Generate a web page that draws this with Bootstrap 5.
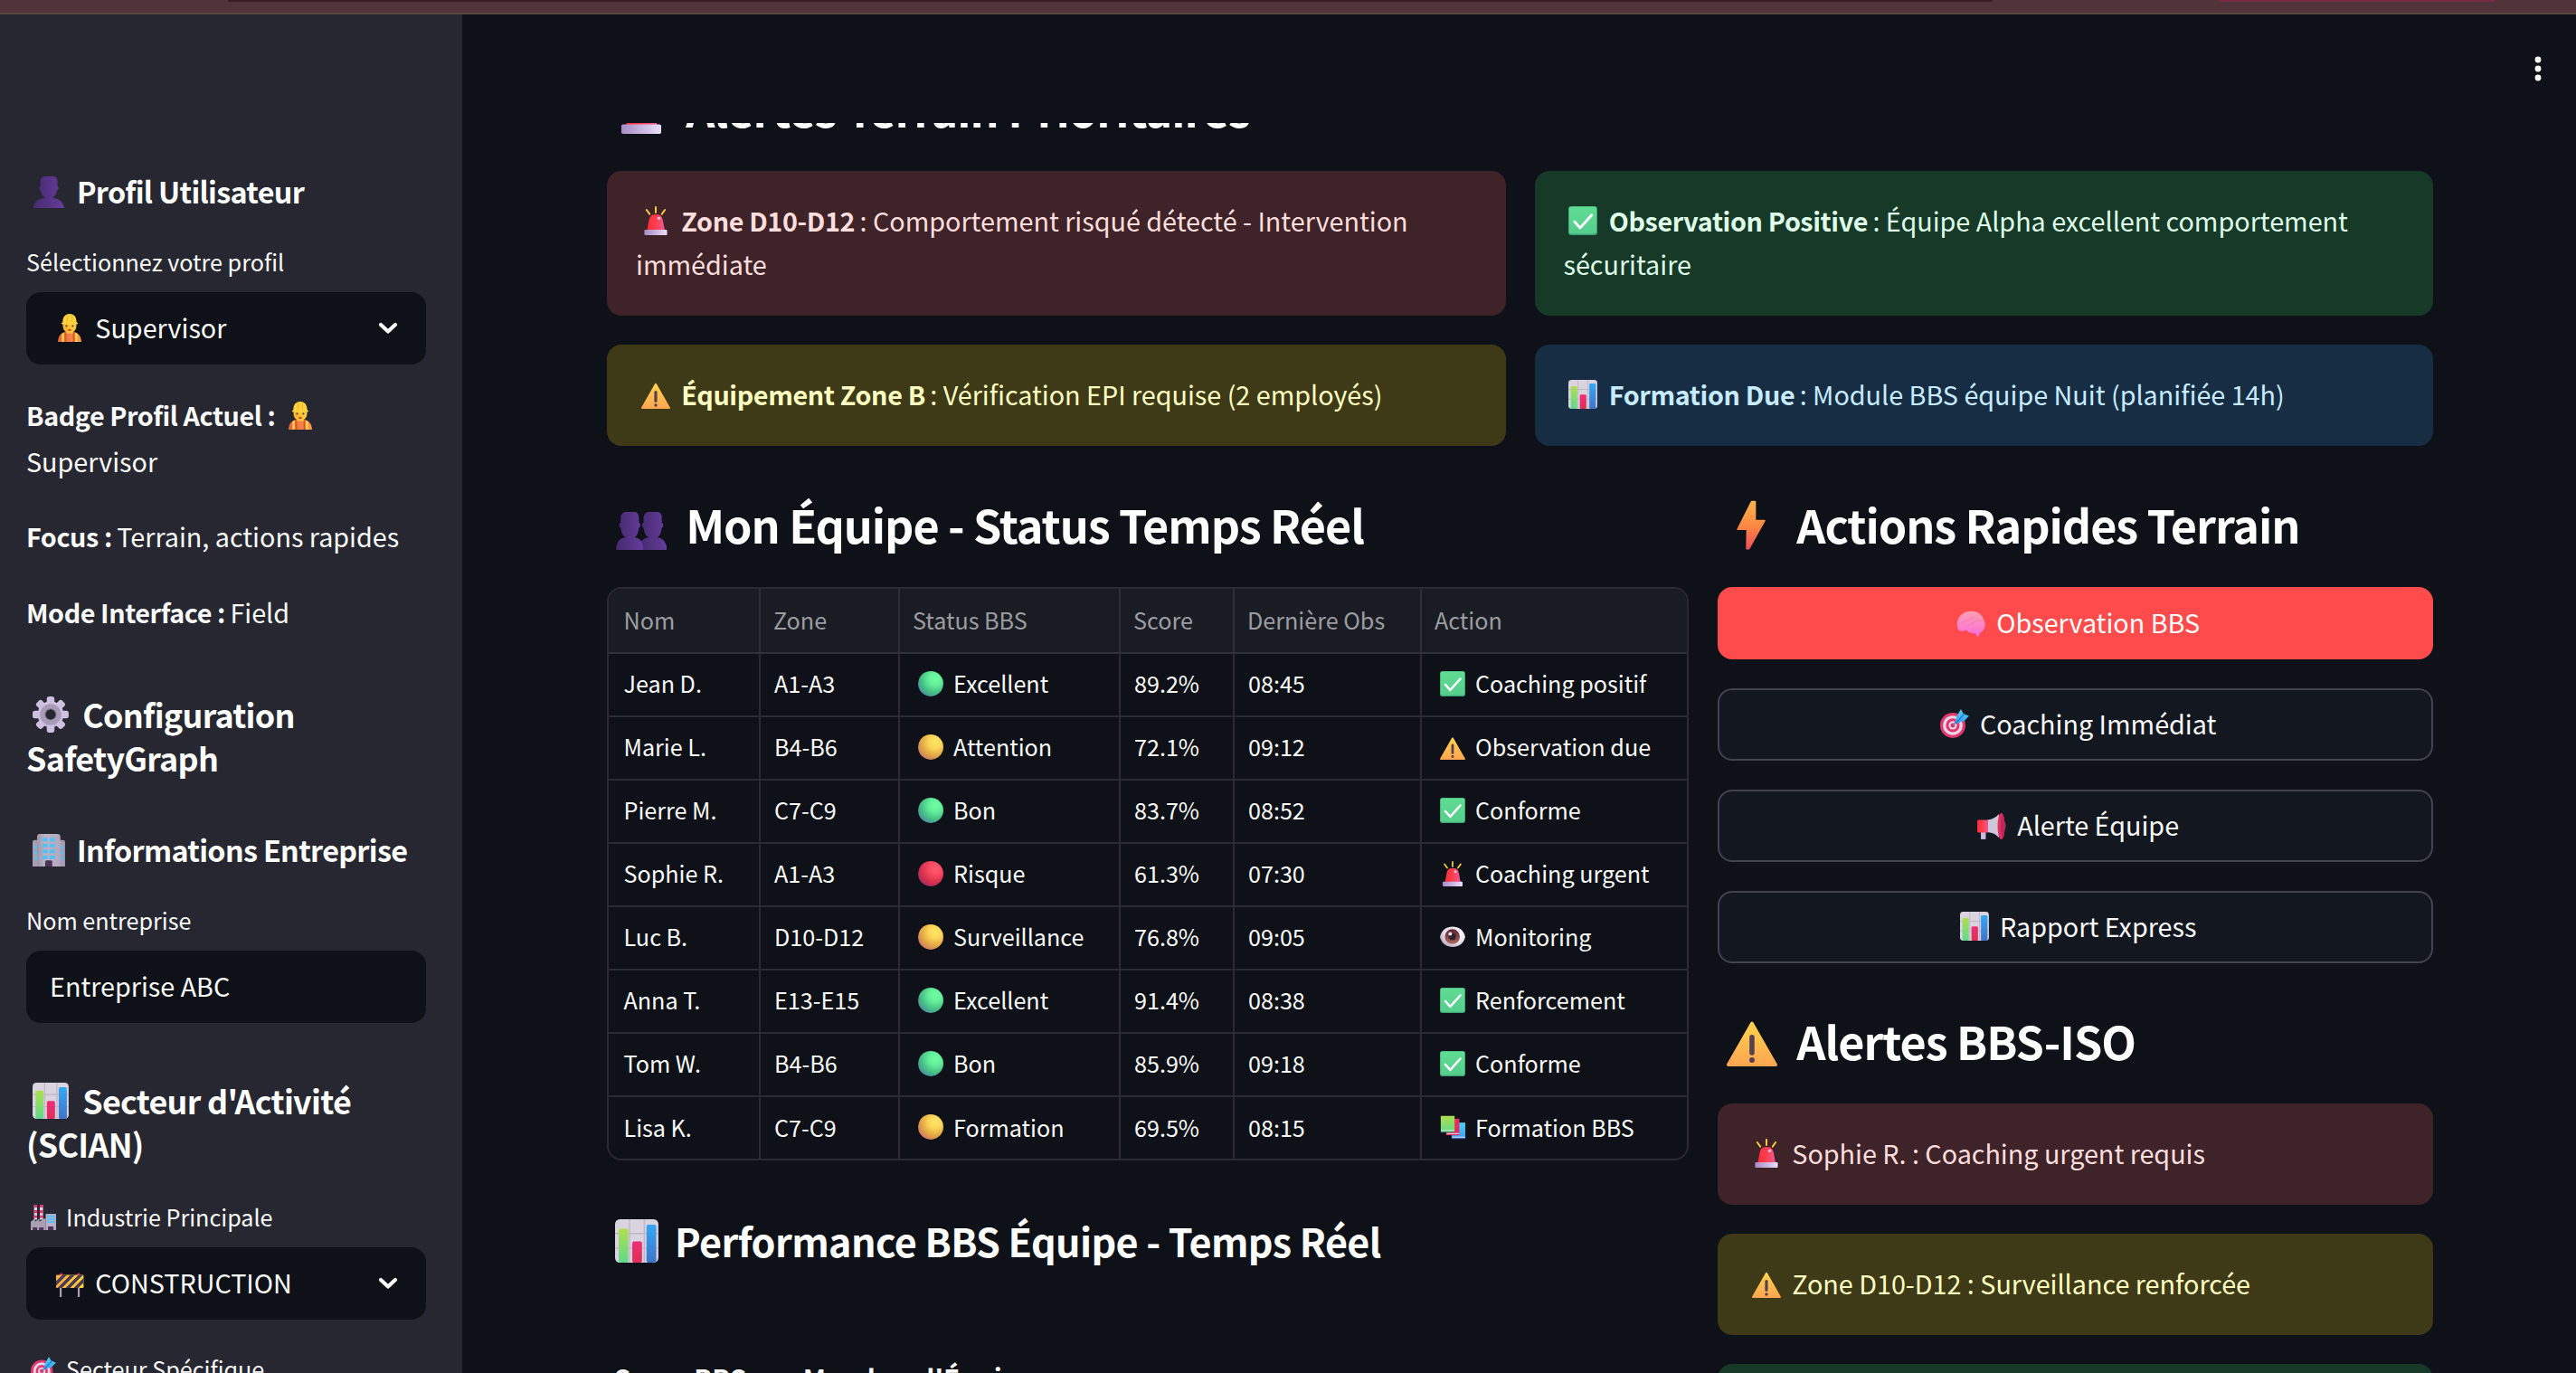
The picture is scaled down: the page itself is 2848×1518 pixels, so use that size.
<!DOCTYPE html>
<html lang="fr" data-bs-theme="dark">
<head>
<meta charset="utf-8">
<meta name="viewport" content="width=device-width, initial-scale=1">
<title>SafetyGraph</title>
<link href="https://cdn.jsdelivr.net/npm/bootstrap@5.3.0/dist/css/bootstrap.min.css" rel="stylesheet">
<style>
  html, body { height: 100%; }
  body { background: #0e1117; color: #fafafa; font-family: "Noto Sans CJK SC", "Noto Sans", sans-serif; font-size: 28.72px; overflow: hidden; }
  strong { font-weight: 700; letter-spacing: -.0125em; margin-right: -1px; }

  /* browser strip */
  .strip { height: 16px; background: #503439; border-bottom: 2px solid #57453f; padding-left: 252px; }
  .strip .omnibar { width: 1951px; height: 2px; background: #381e22; border-radius: 0 0 12px 12px; }
  .strip .pill { width: 306px; height: 2px; margin-left: 250px; background: #782c44; border-radius: 0 0 12px 12px; }

  /* emoji drawings, aligned on the text baseline */
  .emo { width: 1.112em; height: 1.112em; margin: 0 .208em; vertical-align: -.14em; overflow: visible; }

  /* sidebar */
  .side { width: 511px; background: #262730; padding: 173px 40px 0 29px; }
  .side h2, .side h3 { font-weight: 700; margin: 0; letter-spacing: -.0205em; white-space: nowrap; }
  .side h2 { font-size: 35.9px; line-height: 48px; }
  .side h3 { font-size: 32.3px; line-height: 44px; }
  .side p { line-height: 51.2px; margin: 0 0 32px; }
  .side label { display: block; font-size: 25.15px; line-height: 40px; margin-top: 36px; margin-bottom: 14px; white-space: nowrap; }
  .field { height: 80px; border-radius: 16px; background: #0e1117; padding: 0 31px 0 26px; line-height: 78px; }
  .field .chev { width: 22px; height: 14px; margin-top: 33px; }
  .profile { margin-top: 30px; }
  .profile strong { letter-spacing: -.0145em; }

  /* main area */
  .topbar { height: 120px; padding-right: 38px; padding-top: 22px; }
  .dots { width: 8px; height: 28px; }
  .page { margin: -50px 158px 0 160px; }
  .sec { font-size: 50.3px; font-weight: 700; line-height: 67px; letter-spacing: -.0205em; margin: 0 0 36px; white-space: nowrap; }
  .sub { font-size: 43.1px; font-weight: 700; line-height: 58px; letter-spacing: -.014em; margin: 59px 0 0; white-space: nowrap; }
  .plot-title { font-size: 29.6px; font-weight: 700; line-height: 40px; margin: 104px 0 0 8px; white-space: nowrap; }
  .gap-32 { gap: 32px; }
  .pair { display: grid; grid-template-columns: 1fr 1fr; gap: 32px; }
  .lower { margin-top: 53px; }
  .team { width: 1196px; }
  .note { border: 0; border-radius: 16px; margin: 0; padding: 30.5px 32px 33.5px; line-height: 48px; }
  .note-red { background: #3e2328; color: #ffdede; }
  .note-green { background: #173928; color: #dffde9; }
  .note-yellow { background: #3e3a17; color: #ffffc2; }
  .note-blue { background: #172d43; color: #c7ebff; }

  .grid-wrap { border: 2px solid #292b30; border-radius: 16px; overflow: hidden; }
  .grid-wrap table { table-layout: fixed; margin: 0; border-collapse: separate; border-spacing: 0; font-size: 25.15px; --bs-table-bg: transparent; }
  .grid-wrap th, .grid-wrap td { height: 70px; padding: 0 0 4px 15px; line-height: 40px; border: 0 solid #292b30; border-width: 0 2px 2px 0; vertical-align: middle; white-space: nowrap; color: #fafafa; }
  .grid-wrap th { height: 72px; background: #1a1c24; color: #9c9da1; font-weight: 400; border-color: #2f3138; padding-left: 14px; padding-bottom: 2px; }
  .grid-wrap th:first-child, .grid-wrap td:first-child { padding-left: 16.5px; }
  .grid-wrap th:last-child, .grid-wrap td:last-child { border-right-width: 0; }
  .grid-wrap tbody tr:last-child td { border-bottom-width: 0; height: 68px; padding-bottom: 3px; }

  .act { height: 80px; border: 2px solid #41444c; border-radius: 16px; background: #131720; color: #fafafa; font-size: inherit; line-height: 71px; padding: 0 0 4px; }
  .act.act-main { background: #ff4b4b; border-color: #ff4b4b; color: #fff; }
  .iso { margin-top: 52px; }
</style>
<script src="https://cdn.jsdelivr.net/npm/bootstrap@5.3.0/dist/js/bootstrap.bundle.min.js"></script>
</head>
<body class="d-flex flex-column">

<svg width="0" height="0" class="position-absolute" aria-hidden="true">
  <defs>
    <linearGradient id="gPurple" x1="0" x2="1"><stop offset="0" stop-color="#472a70"/><stop offset="1" stop-color="#633c9a"/></linearGradient>
    <linearGradient id="gRed" x1="0" x2="1"><stop offset="0" stop-color="#ff2d35"/><stop offset=".5" stop-color="#ff3f50"/><stop offset="1" stop-color="#f0589a"/></linearGradient>
    <linearGradient id="gBase" x1="0" x2="1"><stop offset="0" stop-color="#a68cc4"/><stop offset="1" stop-color="#eadff8"/></linearGradient>
    <linearGradient id="gWarn" x1="0" y1="0" x2="0" y2="1"><stop offset="0" stop-color="#ffd24d"/><stop offset="1" stop-color="#ffa651"/></linearGradient>
    <linearGradient id="gLime" x1="0" y1="0" x2="0" y2="1"><stop offset="0" stop-color="#aee04d"/><stop offset="1" stop-color="#5fd98c"/></linearGradient>
    <linearGradient id="gPink" x1="0" y1="0" x2="0" y2="1"><stop offset="0" stop-color="#f02f78"/><stop offset="1" stop-color="#dc2f55"/></linearGradient>
    <linearGradient id="gBlue" x1="0" y1="0" x2="0" y2="1"><stop offset="0" stop-color="#36a8f5"/><stop offset="1" stop-color="#3f74c8"/></linearGradient>
    <linearGradient id="gSky" x1="0" y1="0" x2="0" y2="1"><stop offset="0" stop-color="#4bd0ef"/><stop offset="1" stop-color="#3aa0f4"/></linearGradient>
    <linearGradient id="gGear" x1="0" y1="0" x2="0" y2="1"><stop offset="0" stop-color="#dcd3ea"/><stop offset="1" stop-color="#b9a5d3"/></linearGradient>
    <linearGradient id="gWall" x1="0" x2="1"><stop offset="0" stop-color="#9f96a6"/><stop offset=".35" stop-color="#bcb2c6"/><stop offset="1" stop-color="#b3a9bf"/></linearGradient>
    <linearGradient id="gBolt" x1="0" y1="0" x2="0" y2="1"><stop offset="0" stop-color="#fdb447"/><stop offset=".55" stop-color="#fb8543"/><stop offset="1" stop-color="#f2505a"/></linearGradient>
    <linearGradient id="gBrain" x1="0" y1="0" x2="0" y2="1"><stop offset="0" stop-color="#ff9fb0"/><stop offset="1" stop-color="#fd6be0"/></linearGradient>
    <linearGradient id="gStripe" x1="0" x2="1"><stop offset="0" stop-color="#ffab45"/><stop offset="1" stop-color="#fdd835"/></linearGradient>
    <linearGradient id="gFace" x1="0" x2="1"><stop offset="0" stop-color="#ffb22b"/><stop offset="1" stop-color="#ffcf3a"/></linearGradient>
    <linearGradient id="gVest" x1="0" x2="1"><stop offset="0" stop-color="#e8643a"/><stop offset="1" stop-color="#ff9a55"/></linearGradient>
    <linearGradient id="gCheck" x1="0" y1="0" x2="0" y2="1"><stop offset="0" stop-color="#5fdc93"/><stop offset="1" stop-color="#56cd8c"/></linearGradient>
    <radialGradient id="gGreenBall" cx=".68" cy=".3" r=".75"><stop offset="0" stop-color="#70ffa3"/><stop offset=".35" stop-color="#64ef9b"/><stop offset=".75" stop-color="#45bd83"/><stop offset="1" stop-color="#4c93a0"/></radialGradient>
    <radialGradient id="gYellowBall" cx=".68" cy=".3" r=".75"><stop offset="0" stop-color="#ffe766"/><stop offset=".35" stop-color="#fbd558"/><stop offset=".75" stop-color="#dfa444"/><stop offset="1" stop-color="#cf7d66"/></radialGradient>
    <radialGradient id="gRedBall" cx=".68" cy=".3" r=".75"><stop offset="0" stop-color="#ff5c72"/><stop offset=".35" stop-color="#f84a60"/><stop offset=".75" stop-color="#d5304c"/><stop offset="1" stop-color="#a82a66"/></radialGradient>
    <radialGradient id="gEye" cx=".65" cy=".35" r=".8"><stop offset="0" stop-color="#fff"/><stop offset=".6" stop-color="#e6dfe8"/><stop offset="1" stop-color="#a58cb8"/></radialGradient>
    <linearGradient id="gIris" x1="0" y1="0" x2="0" y2="1"><stop offset="0" stop-color="#5d2437"/><stop offset="1" stop-color="#b06a5c"/></linearGradient>
    <clipPath id="cBoard"><rect x="1" y="7.5" width="30.500" height="14.500" rx="1"/></clipPath>
  </defs>
  <symbol id="bust" viewBox="0 0 32 32"><path fill="url(#gPurple)" d="M12.500 1h7.500c3 0 4.500 2 4.500 5v4.500c1.500 0 1.400 4-.4 4-.6 4.500-3.500 7-5.100 7.500 7 .5 11.300 4 12.200 10H.6c.9-6 5.200-9.500 12.200-10-1.600-.5-4.300-3-4.900-7.500-1.600 0-1.700-4-.2-4V6c0-3 1.800-5 4.800-5z"/></symbol>
  <symbol id="busts" viewBox="0 0 32 32"><path fill="url(#gPurple)" d="M21 8h5c2 0 3 1.500 3 3.500v3.300c1.200 0 1.200 3.200 0 3.200-.3 3.400-1.500 5.500-3 6.200 3.500.2 6.300 3 6.300 8H15c0-5 1.500-7.800 6-8-1.800-.7-3.200-2.800-3.500-6.200-1.200 0-1.200-3.200 0-3.200v-3.300C17.500 9.500 19 8 21 8z"/><path fill="url(#gPurple)" d="M6.500 8h5c2 0 3 1.500 3 3.500v3.300c1.200 0 1.200 3.200 0 3.200-.3 3.400-1.500 5.500-3 6.200 4 .2 5.800 3 5.800 8H.2c0-5 1.800-7.800 6.300-8-1.800-.7-3.200-2.800-3.500-6.200-1.200 0-1.200-3.200 0-3.200v-3.300C3 9.500 4.500 8 6.500 8z"/></symbol>
  <symbol id="worker" viewBox="0 0 32 32"><path fill="url(#gVest)" d="M3 32c.3-6.500 3.500-10.500 9-11h8c5.500.5 8.700 4.500 9 11z"/><path fill="#ffdc45" d="M7.500 23l2.300-1.300V32H7.500zM22.200 21.700l2.300 1.300v9h-2.300z"/><path fill="#e0562f" d="M10.500 21.300h2V32h-2zM19.600 21.300h2V32h-2z"/><path fill="url(#gFace)" d="M8.500 10h15v4c0 3.500-1.500 5.800-4 7.500v1.200h-7v-1.200c-2.500-1.700-4-4-4-7.500z"/><path fill="#ffd23c" d="M8.300 10.500C8.300 4.500 11 1 16 1s7.700 3.500 7.700 9.500l1 .3c.6.200.6 1.400 0 1.500-5.800 1-11.600 1-17.400 0-.6-.1-.6-1.300 0-1.500z"/><path fill="#f5b731" d="M13 1.500h1v9h-1zM18 1.500h1v9h-1z"/><circle cx="12.500" cy="14.500" r="1.100" fill="#5c4a52"/><circle cx="19.500" cy="14.500" r="1.100" fill="#5c4a52"/><ellipse cx="16" cy="19" rx="2" ry=".9" fill="#c43b3b"/></symbol>
  <symbol id="gear" viewBox="0 0 32 32"><g fill="url(#gGear)"><path fill-rule="evenodd" d="M16 4.500a11.500 11.500 0 1 0 0 23 11.500 11.500 0 0 0 0-23zm0 6.500a5 5 0 1 1 0 10 5 5 0 0 1 0-10z"/></g><g fill="#cdc0e0"><rect id="tooth" x="12.600" y="0" width="6.800" height="8" rx="2.200"/><use href="#tooth" transform="rotate(45 16 16)"/><use href="#tooth" transform="rotate(90 16 16)"/><use href="#tooth" transform="rotate(135 16 16)"/><use href="#tooth" transform="rotate(180 16 16)"/><use href="#tooth" transform="rotate(225 16 16)"/><use href="#tooth" transform="rotate(270 16 16)"/><use href="#tooth" transform="rotate(315 16 16)"/></g><circle cx="16" cy="16" r="7.300" fill="none" stroke="#a99cb8" stroke-width="4.200"/><circle cx="16" cy="16" r="5" fill="none" stroke="#8d829a" stroke-width="1"/></symbol>
  <symbol id="office" viewBox="0 0 32 32"><path fill="#a79db2" d="M0 8q0-2 2-2h28q2 0 2 2v24H0z"/><path fill="url(#gWall)" d="M4.400 3q0-3 3-3h17q3 0 3 3v29h-23z"/><g fill="#4cc3fb"><path d="M9.800 4h5v3.400h-5zM9.800 9.800h5v3.400h-5zM9.800 15.600h5V19h-5zM9.800 21.400h5v3.400h-5zM17 4h4.800v3.400H17zM17 9.800h4.800v3.400H17zM17 15.600h4.800V19H17zM17 21.400h4.800v3.400H17zM1.800 11.500h2.600v3H1.800zM1.800 17h2.600v3H1.800zM1.800 22.500h2.600v3H1.800zM27.600 11.500h2.600v3h-2.600zM27.600 17h2.600v3h-2.600zM27.600 22.500h2.600v3h-2.600z"/></g><path fill="#493453" d="M12.400 32v-4.500q0-1.500 1.500-1.500h4q1.500 0 1.500 1.500V32z"/></symbol>
  <symbol id="chart" viewBox="0 0 32 32"><rect width="32" height="32" rx="3.500" fill="#dad3e0"/><path stroke="#bfb6c6" stroke-width=".9" d="M10.700 0v32M21.600 0v32M0 10.500h32M0 21.300h32" fill="none"/><rect x="2.700" y="7" width="7" height="25" rx="1.300" fill="url(#gLime)"/><rect x="12.700" y="16.300" width="7.200" height="15.700" rx="1.300" fill="url(#gPink)"/><rect x="23.200" y="4" width="7.200" height="28" rx="1.300" fill="url(#gBlue)"/></symbol>
  <symbol id="factory" viewBox="0 0 32 32"><path fill="#dfd8e6" d="M4.200 0H8v19H4.200zM11.500 0h4v19h-4z"/><path fill="#e8336b" d="M4.200 0H8v3.500H4.200zM4.200 7H8v3.500H4.200zM4.200 13.500H8v3H4.200zM11.500 0h4v3.500h-4zM11.500 7h4v3.500h-4zM11.500 13.500h4v3h-4z"/><path fill="#aaa0b4" d="M0 32V21.500l5.500-4v4l5.500-4v4l5.500-4H19V32z"/><path fill="#b9afc6" d="M19 11.500h13V32H19z"/><path fill="#49c0fa" d="M20.800 13.500h2.700v2.600h-2.700zM24.300 13.500H27v2.600h-2.700zM27.800 13.500h2.700v2.600h-2.700zM20.800 16.900h2.700v2.600h-2.700zM24.300 16.900H27v2.600h-2.700zM27.800 16.900h2.700v2.600h-2.700zM20.800 20.300h2.700v2.600h-2.700zM24.300 20.300H27v2.600h-2.700zM27.800 20.300h2.700v2.600h-2.700z"/><path fill="#4a3757" d="M2.500 28.500h5.700V32H2.500zM10.500 28.500h5.700V32h-5.700zM21.800 27.500h7V32h-7z"/></symbol>
  <symbol id="barrier" viewBox="0 0 32 32"><path fill="#ac9cb8" d="M5 21h2.200v11H5zM25 21h2.200v11H25z"/><circle cx="6.800" cy="7" r="1.700" fill="#c42355"/><circle cx="26" cy="7" r="1.700" fill="#c42355"/><g clip-path="url(#cBoard)"><path fill="url(#gStripe)" d="M0 7h32v16H0z"/><path stroke="#4b3a52" stroke-width="3.600" d="M-5 23L12 6M4 23L21 6M13 23L30 6M22 23L39 6"/></g></symbol>
  <symbol id="target" viewBox="0 0 32 32"><circle cx="14" cy="18" r="14" fill="#e23a6e"/><circle cx="14" cy="18" r="10.800" fill="#e4d8ea"/><circle cx="14" cy="18" r="7.600" fill="#e8366c"/><circle cx="14" cy="18" r="4.600" fill="#e4d8ea"/><circle cx="14" cy="18" r="2.500" fill="#e0306a"/><path stroke="#8b7c9c" stroke-width="1.700" d="M14 18l6-6"/><path fill="url(#gSky)" d="M16.500 16.500l1.500-8L23 0l2.800 5.200L32 7.500 26.800 13z"/><path stroke="#1f76d8" stroke-width="1.300" d="M17 16L27 5"/></symbol>
  <symbol id="siren" viewBox="0 0 32 32"><path stroke="#ffc93f" stroke-width="2" stroke-linecap="round" d="M16 1v6M5.800 4l3.400 4.600M26.200 4l-3.400 4.600"/><path fill="url(#gRed)" d="M6.300 27l2.300-12c.8-3.800 3-5.700 5.700-5.700h3.800c2.700 0 4.900 1.900 5.700 5.700l2.300 12z"/><ellipse cx="19.500" cy="13.500" rx="1.600" ry="1.400" fill="#ffd7dc"/><rect x="3.400" y="26" width="25.200" height="6" rx="1" fill="url(#gBase)"/></symbol>
  <symbol id="check" viewBox="0 0 32 32"><rect width="32" height="32" rx="3" fill="#3ea477"/><rect x=".8" y=".6" width="30.400" height="30" rx="2.500" fill="url(#gCheck)"/><path d="M6.800 17l6.200 7L25.800 9.700" fill="none" stroke="#fff" stroke-width="2.900" stroke-linecap="round" stroke-linejoin="round"/></symbol>
  <symbol id="warn" viewBox="0 0 32 32"><path fill="url(#gWarn)" stroke="url(#gWarn)" stroke-width="2" stroke-linejoin="round" d="M16 4.800L31 31H1z"/><rect x="14.400" y="12" width="3.200" height="13" rx="1.600" fill="#56414f"/><circle cx="16" cy="28" r="1.700" fill="#56414f"/></symbol>
  <symbol id="bolt" viewBox="0 0 32 32"><path fill="url(#gBolt)" stroke="url(#gBolt)" stroke-width="1" stroke-linejoin="round" d="M15.800 1.500h2.200L18 13.500h6L14 31.300h-1.300l.2-12.300H7z"/></symbol>
  <symbol id="brain" viewBox="0 0 32 32"><path fill="url(#gBrain)" d="M3 25C-1 20 .5 12 5 8c4-4 9-5 14-4 6 .5 10 4.500 11.500 9.500 2.500 5.500 1 12-4.500 14-.6 2-.8 4.500-3 4.200-1.200-1-1-2.500-2-3.500-5 0-8.500-1-10-4C8 26 5 26.500 3 25z"/><path fill="none" stroke="#f07aa8" stroke-width="1" stroke-linecap="round" d="M4 17c3 0 5-3 8-3s4-3 7-4M12 21c2-4 6-3 8-5s5-1 8-2M16 25c2-3 6-1 9-4"/></symbol>
  <symbol id="horn" viewBox="0 0 32 32"><path fill="#c9b9dc" d="M4 23h5.500v9H4z"/><ellipse cx="28" cy="17" rx="4" ry="5.500" fill="#4a3553"/><path fill="#cfc6da" d="M11.500 10.500C17 10 21 7.500 24 4v26c-3-3.500-7-5.500-12.500-6z"/><path fill="url(#gRed)" d="M1.500 10.500h10.300V24.500H1.500Q0 24.500 0 23V12q0-1.500 1.500-1.500z"/><ellipse cx="26.600" cy="17.500" rx="4" ry="14.500" fill="#e22f62"/><ellipse cx="28.300" cy="17.500" rx="2.300" ry="12.500" fill="#bf2556"/></symbol>
  <symbol id="eye" viewBox="0 0 32 32"><path fill="url(#gEye)" d="M0 16C2 7 8.500 3 16 3s14 4 16 13c-2 8.500-8.500 12.500-16 12.500S2 24.500 0 16z"/><circle cx="15.700" cy="15.500" r="9.500" fill="url(#gIris)"/><circle cx="15.700" cy="15.500" r="4.600" fill="#33222c"/><circle cx="13" cy="12" r="2.300" fill="#e9dfe6"/></symbol>
  <symbol id="books" viewBox="0 0 32 32"><path fill="url(#gSky)" d="M15 10.500h17.500V31H15z"/><path fill="#d9e3f5" d="M15.500 28.300h16.500v1.200H15.500z"/><path fill="#4a5bb8" d="M15 29.700h17.500V31H15z"/><path fill="#e62e5e" d="M8 5.500h16.500V26.500H8z"/><path fill="#f3dbe6" d="M8.500 23.800h15.500V25H8.500z"/><path fill="url(#gLime)" d="M1 2h17.500v21H1z"/><path fill="#e5f3ea" d="M1.500 20h16.500v1.200H1.500z"/><path fill="#348a6e" d="M1 21.600h17.500V23H1z"/></symbol>
  <symbol id="ok" viewBox="0 0 32 32"><circle cx="16" cy="16" r="16" fill="url(#gGreenBall)"/></symbol>
  <symbol id="mid" viewBox="0 0 32 32"><circle cx="16" cy="16" r="16" fill="url(#gYellowBall)"/></symbol>
  <symbol id="bad" viewBox="0 0 32 32"><circle cx="16" cy="16" r="16" fill="url(#gRedBall)"/></symbol>
  <symbol id="chevron" viewBox="0 0 22 14"><path d="M3 3l8 7.500L19 3" fill="none" stroke="#fafafa" stroke-width="4.200" stroke-linecap="round" stroke-linejoin="round"/></symbol>
</svg>

<div class="strip d-flex flex-shrink-0"><div class="omnibar"></div><div class="pill"></div></div>

<div class="d-flex flex-fill overflow-hidden">
  <aside class="side flex-shrink-0 overflow-hidden">
    <h3><svg class="emo"><use href="#bust"/></svg> Profil Utilisateur</h3>
    <label>Sélectionnez votre profil</label>
    <div class="field d-flex justify-content-between"><span><svg class="emo"><use href="#worker"/></svg> Supervisor</span><svg class="chev"><use href="#chevron"/></svg></div>
    <div class="profile">
      <p><strong>Badge Profil Actuel :</strong> <svg class="emo"><use href="#worker"/></svg><br>Supervisor</p>
      <p><strong>Focus :</strong> Terrain, actions rapides</p>
      <p class="mb-0"><strong>Mode Interface :</strong> Field</p>
    </div>
    <h2 style="margin-top:63.500px"><svg class="emo"><use href="#gear"/></svg> Configuration<br>SafetyGraph</h2>
    <h3 style="margin-top:56px"><svg class="emo"><use href="#office"/></svg> Informations Entreprise</h3>
    <label>Nom entreprise</label>
    <div class="field">Entreprise ABC</div>
    <h2 style="margin-top:61px"><svg class="emo"><use href="#chart"/></svg> Secteur d'Activité<br>(SCIAN)</h2>
    <label style="margin-top:37px"><svg class="emo"><use href="#factory"/></svg> Industrie Principale</label>
    <div class="field d-flex justify-content-between"><span><svg class="emo"><use href="#barrier"/></svg> CONSTRUCTION</span><svg class="chev"><use href="#chevron"/></svg></div>
    <label style="margin-top:34px"><svg class="emo"><use href="#target"/></svg> Secteur Spécifique</label>
  </aside>

  <main class="d-flex flex-column flex-fill overflow-hidden">
    <header class="topbar d-flex justify-content-end align-items-start flex-shrink-0">
      <svg class="dots mt-4" viewBox="0 0 8 28"><g fill="#fafafa"><circle cx="4" cy="4" r="3.400"/><circle cx="4" cy="14" r="3.400"/><circle cx="4" cy="24" r="3.400"/></g></svg>
    </header>
    <div class="flex-fill overflow-hidden">
      <div class="page">
        <h3 class="sec"><svg class="emo"><use href="#siren"/></svg> Alertes Terrain Prioritaires</h3>
        <div class="pair">
          <div class="alert note note-red"><svg class="emo"><use href="#siren"/></svg> <strong>Zone D10-D12</strong> : Comportement risqué détecté - Intervention immédiate</div>
          <div class="alert note note-green"><svg class="emo"><use href="#check"/></svg> <strong>Observation Positive</strong> : Équipe Alpha excellent comportement sécuritaire</div>
          <div class="alert note note-yellow"><svg class="emo"><use href="#warn"/></svg> <strong>Équipement Zone B</strong> : Vérification EPI requise (2 employés)</div>
          <div class="alert note note-blue"><svg class="emo"><use href="#chart"/></svg> <strong>Formation Due</strong> : Module BBS équipe Nuit (planifiée 14h)</div>
        </div>

        <div class="lower d-flex gap-32">
          <section class="team flex-shrink-0">
            <h3 class="sec"><svg class="emo"><use href="#busts"/></svg> Mon Équipe - Status Temps Réel</h3>
            <div class="grid-wrap">
              <table class="table">
                <colgroup><col style="width:168px"><col style="width:154px"><col style="width:244px"><col style="width:126px"><col style="width:207px"><col></colgroup>
                <thead><tr><th>Nom</th><th>Zone</th><th>Status BBS</th><th>Score</th><th>Dernière Obs</th><th>Action</th></tr></thead>
                <tbody>
                  <tr><td>Jean D.</td><td>A1-A3</td><td><svg class="emo"><use href="#ok"/></svg> Excellent</td><td>89.2%</td><td>08:45</td><td><svg class="emo"><use href="#check"/></svg> Coaching positif</td></tr>
                  <tr><td>Marie L.</td><td>B4-B6</td><td><svg class="emo"><use href="#mid"/></svg> Attention</td><td>72.1%</td><td>09:12</td><td><svg class="emo"><use href="#warn"/></svg> Observation due</td></tr>
                  <tr><td>Pierre M.</td><td>C7-C9</td><td><svg class="emo"><use href="#ok"/></svg> Bon</td><td>83.7%</td><td>08:52</td><td><svg class="emo"><use href="#check"/></svg> Conforme</td></tr>
                  <tr><td>Sophie R.</td><td>A1-A3</td><td><svg class="emo"><use href="#bad"/></svg> Risque</td><td>61.3%</td><td>07:30</td><td><svg class="emo"><use href="#siren"/></svg> Coaching urgent</td></tr>
                  <tr><td>Luc B.</td><td>D10-D12</td><td><svg class="emo"><use href="#mid"/></svg> Surveillance</td><td>76.8%</td><td>09:05</td><td><svg class="emo"><use href="#eye"/></svg> Monitoring</td></tr>
                  <tr><td>Anna T.</td><td>E13-E15</td><td><svg class="emo"><use href="#ok"/></svg> Excellent</td><td>91.4%</td><td>08:38</td><td><svg class="emo"><use href="#check"/></svg> Renforcement</td></tr>
                  <tr><td>Tom W.</td><td>B4-B6</td><td><svg class="emo"><use href="#ok"/></svg> Bon</td><td>85.9%</td><td>09:18</td><td><svg class="emo"><use href="#check"/></svg> Conforme</td></tr>
                  <tr><td>Lisa K.</td><td>C7-C9</td><td><svg class="emo"><use href="#mid"/></svg> Formation</td><td>69.5%</td><td>08:15</td><td><svg class="emo"><use href="#books"/></svg> Formation BBS</td></tr>
                </tbody>
              </table>
            </div>
            <h4 class="sub"><svg class="emo"><use href="#chart"/></svg> Performance BBS Équipe - Temps Réel</h4>
            <div class="plot-title">Score BBS par Membre d'Équipe</div>
          </section>

          <section class="flex-fill">
            <h3 class="sec"><svg class="emo"><use href="#bolt"/></svg> Actions Rapides Terrain</h3>
            <div class="d-grid gap-32">
              <button class="btn act act-main"><svg class="emo"><use href="#brain"/></svg> Observation BBS</button>
              <button class="btn act"><svg class="emo"><use href="#target"/></svg> Coaching Immédiat</button>
              <button class="btn act"><svg class="emo"><use href="#horn"/></svg> Alerte Équipe</button>
              <button class="btn act"><svg class="emo"><use href="#chart"/></svg> Rapport Express</button>
            </div>
            <h3 class="sec iso"><svg class="emo"><use href="#warn"/></svg> Alertes BBS-ISO</h3>
            <div class="d-grid gap-32">
              <div class="alert note note-red"><svg class="emo"><use href="#siren"/></svg> Sophie R. : Coaching urgent requis</div>
              <div class="alert note note-yellow"><svg class="emo"><use href="#warn"/></svg> Zone D10-D12 : Surveillance renforcée</div>
              <div class="alert note note-green"><svg class="emo"><use href="#check"/></svg></div>
            </div>
          </section>
        </div>
      </div>
    </div>
  </main>
</div>
</body>
</html>
